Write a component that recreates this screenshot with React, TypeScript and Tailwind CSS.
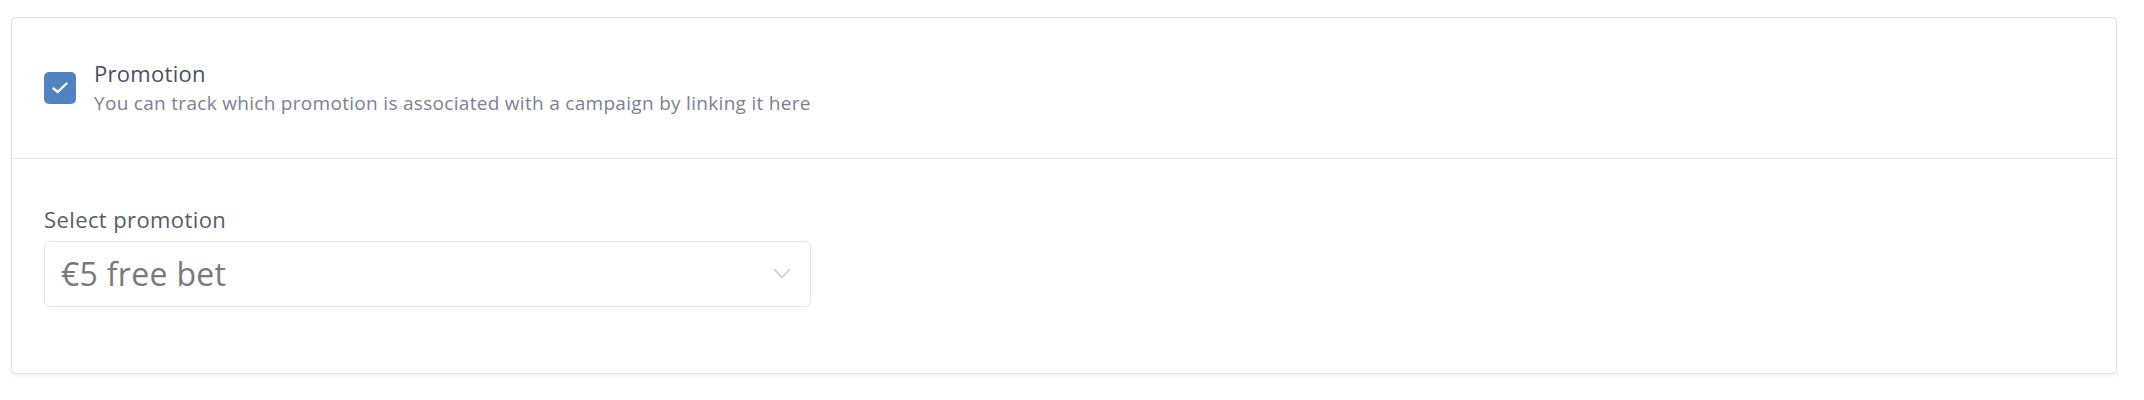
import React, { useState } from 'react';

const font = { fontFamily: '"Open Sans", "Noto Sans", sans-serif' };

const promotions = ['€5 free bet', '€10 free bet', 'Deposit bonus'];

const App = () => {
  const [linked, setLinked] = useState(true);
  const [promotion, setPromotion] = useState(promotions[0]);

  return (
    <div className="min-h-[400px] w-[2144px] bg-white pt-[17px] pl-[11px]" style={font}>
      <div className="w-[2106px] rounded-[4px] border border-[#e1e1e7] bg-white shadow-[0_2px_4px_rgba(0,0,0,0.05)]">
        {/* linking toggle */}
        <div className="flex h-[141px] items-center gap-[18px] border-b border-[#e3e3e9] px-[32px]">
          <button
            type="button"
            aria-label="Link promotion"
            onClick={() => setLinked(!linked)}
            className={
              linked
                ? 'flex h-[32px] w-[32px] items-center justify-center rounded-[5px] bg-[#5182c1]'
                : 'flex h-[32px] w-[32px] items-center justify-center rounded-[5px] border border-[#c9ccd6] bg-white'
            }
          >
            {linked && (
              <svg width="18" height="18" viewBox="0 0 18 18" fill="none">
                <path d="M2.5 9.5 L6.8 13 L15.5 4.5" stroke="white" strokeWidth="2.4" strokeLinecap="round" strokeLinejoin="round" />
              </svg>
            )}
          </button>
          <div className="flex flex-col pb-[1px]">
            <span className="text-[22px] leading-[28px] tracking-[0.3px] text-[#4b5060]">Promotion</span>
            <span className="mt-[3px] text-[19px] leading-[26px] tracking-[0.3px] text-[#7c8190]">
              You can track which promotion is associated with a campaign by linking it here
            </span>
          </div>
        </div>

        {/* select */}
        <div className="px-[32px] pt-[46px] pb-[66px]">
          <label className="block text-[22px] leading-[28px] tracking-[0.4px] text-[#575c6b]">Select promotion</label>
          <div className="relative mt-[8px] w-[767px]">
            <select
              value={promotion}
              onChange={(e) => setPromotion(e.target.value)}
              className="h-[66px] w-full appearance-none rounded-[6px] border border-[#e3e3e8] bg-white pl-[16px] pr-[50px] text-[32px] tracking-[0.3px] text-[#7a7a7a] outline-none"
              style={font}
            >
              {promotions.map((p) => (
                <option key={p} value={p}>
                  {p}
                </option>
              ))}
            </select>
            <svg
              className="pointer-events-none absolute right-[20px] top-[27px]"
              width="18"
              height="11"
              viewBox="0 0 18 11"
              fill="none"
            >
              <path d="M1 1 L9 9.5 L17 1" stroke="#c6c7cf" strokeWidth="1.3" />
            </svg>
          </div>
        </div>
      </div>
    </div>
  );
};

export default App;
